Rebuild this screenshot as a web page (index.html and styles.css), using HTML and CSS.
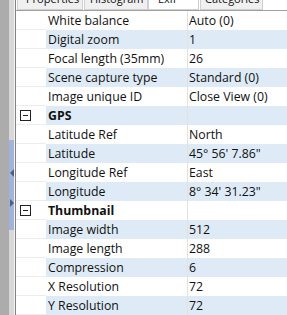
FILE: index.html
```html
<!DOCTYPE html>
<html lang="en">
<head>
    <meta charset="UTF-8">
    <title>Exif</title>
    <link rel="stylesheet" href="styles.css">
</head>
<body>

<div class="window">
    <!-- left dock edge with splitter -->
    <div class="side">
        <div class="side-gray"></div>
        <div class="splitter">
            <div class="grip">
                <span class="arrow-left"></span>
                <span class="arrow-right"></span>
            </div>
        </div>
    </div>

    <div class="panel">
        <div class="tabs">
            <div class="tab tab-props">Properties</div>
            <div class="tab tab-hist">Histogram</div>
            <div class="tab tab-exif active">Exif</div>
            <div class="tab tab-cats">Categories</div>
        </div>

        <div class="grid">
            <div class="row"><div class="gutter"></div><div class="name">White balance</div><div class="value">Auto (0)</div></div>
            <div class="row"><div class="gutter"></div><div class="name">Digital zoom</div><div class="value">1</div></div>
            <div class="row"><div class="gutter"></div><div class="name">Focal length (35mm)</div><div class="value">26</div></div>
            <div class="row"><div class="gutter"></div><div class="name">Scene capture type</div><div class="value">Standard (0)</div></div>
            <div class="row"><div class="gutter"></div><div class="name">Image unique ID</div><div class="value">Close View (0)</div></div>
            <div class="row category"><div class="gutter"><span class="toggle"></span></div><div class="name">GPS</div><div class="value"></div></div>
            <div class="row"><div class="gutter"></div><div class="name">Latitude Ref</div><div class="value">North</div></div>
            <div class="row"><div class="gutter"></div><div class="name">Latitude</div><div class="value">45° 56' 7.86"</div></div>
            <div class="row"><div class="gutter"></div><div class="name">Longitude Ref</div><div class="value">East</div></div>
            <div class="row"><div class="gutter"></div><div class="name">Longitude</div><div class="value">8° 34' 31.23"</div></div>
            <div class="row category"><div class="gutter"><span class="toggle"></span></div><div class="name">Thumbnail</div><div class="value"></div></div>
            <div class="row"><div class="gutter"></div><div class="name">Image width</div><div class="value">512</div></div>
            <div class="row"><div class="gutter"></div><div class="name">Image length</div><div class="value">288</div></div>
            <div class="row"><div class="gutter"></div><div class="name">Compression</div><div class="value">6</div></div>
            <div class="row"><div class="gutter"></div><div class="name">X Resolution</div><div class="value">72</div></div>
            <div class="row"><div class="gutter"></div><div class="name">Y Resolution</div><div class="value">72</div></div>
        </div>
    </div>
</div>

</body>
</html>
```

FILE: styles.css
```css
html, body {
    margin: 0;
    padding: 0;
    width: 287px;
    height: 315px;
    overflow: hidden;
    background: #ffffff;
}
.window {
    display: flex;
    height: 315px;
    font-family: "Open Sans", "Noto Sans", sans-serif;
    font-size: 12.3px;
    color: #111111;
}
.side {
    display: flex;
    width: 15px;
    flex-shrink: 0;
}
.side-gray {
    width: 9px;
    background: #acacac;
}
.splitter {
    width: 6px;
    background: #d8d8d8;
    border-right: 1px solid #f4f4f4;
    box-sizing: border-box;
    display: flex;
    flex-direction: column;
}
.grip {
    margin-top: 140px;
    height: 90px;
    background-color: #e8edf8;
    background-image: radial-gradient(#9fb2db 0.7px, transparent 0.9px);
    background-size: 2px 2px;
    position: relative;
}
.arrow-left, .arrow-right {
    position: absolute;
    left: 1px;
    width: 0;
    height: 0;
    border-top: 4px solid transparent;
    border-bottom: 4px solid transparent;
}
.arrow-left {
    top: 29px;
    border-right: 4px solid #4a5f8c;
}
.arrow-right {
    top: 59px;
    border-left: 4px solid #4a5f8c;
}
.panel {
    flex: 1;
    border-left: 1px solid #828282;
    display: flex;
    flex-direction: column;
    min-width: 0;
}
.tabs {
    height: 10px;
    display: flex;
    padding-left: 1px;
    overflow: hidden;
    background: #ffffff;
}
.tab {
    height: 20px;
    margin-top: -10px;
    line-height: 16px;
    font-size: 11px;
    padding-left: 8px;
    box-sizing: border-box;
    background: #f0f0f0;
    border: 1px solid #d0d0d0;
    white-space: nowrap;
    overflow: hidden;
    flex-shrink: 0;
}
.tab-props {
    width: 66px;
    margin-right: 1px;
}
.tab-hist {
    width: 64px;
    padding-left: 5px;
}
.tab-exif {
    width: 51px;
    padding-left: 9px;
}
.tab-cats {
    width: 63px;
    margin-left: 1px;
    padding-left: 4px;
}
.tab.active {
    background: #ffffff;
}
.grid {
    border-top: 1px solid #a0a0a0;
    flex: 1;
}
.row {
    display: flex;
    height: 19px;
    line-height: 19px;
}
.row:nth-child(even) .name,
.row:nth-child(even) .value {
    background: #deebf6;
}
.gutter {
    width: 30px;
    flex-shrink: 0;
    box-sizing: border-box;
    border-bottom: 1px solid #ececec;
    display: flex;
    align-items: center;
    padding-left: 4px;
}
.name {
    width: 142px;
    flex-shrink: 0;
    padding-left: 2px;
    box-sizing: border-box;
    border-right: 1px solid #e2e2e2;
    white-space: nowrap;
    overflow: hidden;
}
.value {
    flex: 1;
    padding-left: 1px;
    white-space: nowrap;
}
.category .name {
    font-weight: bold;
}
.toggle {
    width: 9px;
    height: 9px;
    border: 1px solid #222;
    position: relative;
    background: #fff;
}
.toggle::after {
    content: "";
    position: absolute;
    left: 2px;
    top: 4px;
    width: 5px;
    height: 1px;
    background: #222;
}
```
